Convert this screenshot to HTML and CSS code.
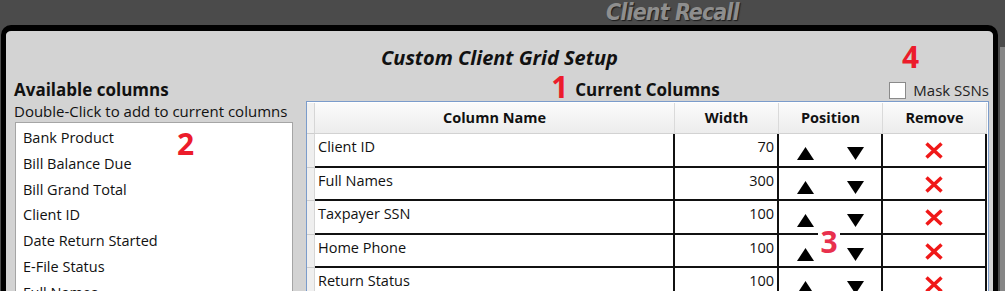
FILE: index.html
```html
<!DOCTYPE html>
<html lang="en">

<head>
    <meta charset="UTF-8">
    <title>Client Recall - Custom Client Grid Setup</title>
    <link rel="stylesheet" href="styles.css">
</head>

<body>
    <div class="topbar">
        <span class="app-title">Client Recall</span>
    </div>

    <div class="dialog">
        <div class="dialog-head">
            <h1 class="dialog-title">Custom Client Grid Setup</h1>
        </div>

        <div class="dialog-body">
            <div class="available">
                <h2 class="section-title">Available columns</h2>
                <p class="hint">Double-Click to add to current columns</p>
                <div class="listbox">
                    <span class="marker marker-2">2</span>
                    <div class="list-item">Bank Product</div>
                    <div class="list-item">Bill Balance Due</div>
                    <div class="list-item">Bill Grand Total</div>
                    <div class="list-item">Client ID</div>
                    <div class="list-item">Date Return Started</div>
                    <div class="list-item">E-File Status</div>
                    <div class="list-item">Full Names</div>
                </div>
            </div>

            <div class="current">
                <div class="current-head">
                    <h2 class="section-title current-title"><span class="marker marker-1">1</span>Current Columns</h2>
                    <label class="mask"><span class="checkbox"></span>Mask SSNs</label>
                    <span class="marker marker-4">4</span>
                </div>

                <div class="grid">
                    <span class="marker marker-3">3</span>
                    <div class="grid-row grid-header">
                        <div class="row-head"></div>
                        <div class="cell col-name">Column Name</div>
                        <div class="cell col-width">Width</div>
                        <div class="cell col-pos">Position</div>
                        <div class="cell col-remove">Remove</div>
                    </div>
                    <div class="grid-row">
                        <div class="row-head"></div>
                        <div class="cell col-name">Client ID</div>
                        <div class="cell col-width">70</div>
                        <div class="cell col-pos">
                            <svg class="arrow" viewBox="0 0 17 13"><polygon points="8.5,0 17,13 0,13" /></svg>
                            <svg class="arrow" viewBox="0 0 17 13"><polygon points="0,0 17,0 8.5,13" /></svg>
                        </div>
                        <div class="cell col-remove">
                            <svg class="remove-x" viewBox="0 0 20 17"><path d="M2.5 1.5 L17.5 15.5 M17.5 1.5 L2.5 15.5" /></svg>
                        </div>
                    </div>
                    <div class="grid-row">
                        <div class="row-head"></div>
                        <div class="cell col-name">Full Names</div>
                        <div class="cell col-width">300</div>
                        <div class="cell col-pos">
                            <svg class="arrow" viewBox="0 0 17 13"><polygon points="8.5,0 17,13 0,13" /></svg>
                            <svg class="arrow" viewBox="0 0 17 13"><polygon points="0,0 17,0 8.5,13" /></svg>
                        </div>
                        <div class="cell col-remove">
                            <svg class="remove-x" viewBox="0 0 20 17"><path d="M2.5 1.5 L17.5 15.5 M17.5 1.5 L2.5 15.5" /></svg>
                        </div>
                    </div>
                    <div class="grid-row">
                        <div class="row-head"></div>
                        <div class="cell col-name">Taxpayer SSN</div>
                        <div class="cell col-width">100</div>
                        <div class="cell col-pos">
                            <svg class="arrow" viewBox="0 0 17 13"><polygon points="8.5,0 17,13 0,13" /></svg>
                            <svg class="arrow" viewBox="0 0 17 13"><polygon points="0,0 17,0 8.5,13" /></svg>
                        </div>
                        <div class="cell col-remove">
                            <svg class="remove-x" viewBox="0 0 20 17"><path d="M2.5 1.5 L17.5 15.5 M17.5 1.5 L2.5 15.5" /></svg>
                        </div>
                    </div>
                    <div class="grid-row">
                        <div class="row-head"></div>
                        <div class="cell col-name">Home Phone</div>
                        <div class="cell col-width">100</div>
                        <div class="cell col-pos">
                            <svg class="arrow" viewBox="0 0 17 13"><polygon points="8.5,0 17,13 0,13" /></svg>
                            <svg class="arrow" viewBox="0 0 17 13"><polygon points="0,0 17,0 8.5,13" /></svg>
                        </div>
                        <div class="cell col-remove">
                            <svg class="remove-x" viewBox="0 0 20 17"><path d="M2.5 1.5 L17.5 15.5 M17.5 1.5 L2.5 15.5" /></svg>
                        </div>
                    </div>
                    <div class="grid-row">
                        <div class="row-head"></div>
                        <div class="cell col-name">Return Status</div>
                        <div class="cell col-width">100</div>
                        <div class="cell col-pos">
                            <svg class="arrow" viewBox="0 0 17 13"><polygon points="8.5,0 17,13 0,13" /></svg>
                            <svg class="arrow" viewBox="0 0 17 13"><polygon points="0,0 17,0 8.5,13" /></svg>
                        </div>
                        <div class="cell col-remove">
                            <svg class="remove-x" viewBox="0 0 20 17"><path d="M2.5 1.5 L17.5 15.5 M17.5 1.5 L2.5 15.5" /></svg>
                        </div>
                    </div>
                </div>
            </div>
        </div>
    </div>
</body>

</html>
```

FILE: styles.css
```css
body {
    margin: 0;
    height: 291px;
    overflow: hidden;
    background: #4b4b4b linear-gradient(90deg, #4b4b4b 1000px, #868686 1000px) 0 47px / 100% 100% no-repeat;
    font-family: "Open Sans", "Noto Sans", sans-serif;
    color: #111;
}

/* Window title strip behind the dialog */
.topbar {
    height: 25px;
    padding-left: 606px;
    box-sizing: border-box;
}

.app-title {
    font-family: "Liberation Sans Narrow", "DejaVu Sans", sans-serif;
    font-stretch: condensed;
    font-style: italic;
    font-weight: bold;
    font-size: 23px;
    line-height: 25px;
    letter-spacing: -0.9px;
    color: #8e8e8e;
    text-shadow: 1px 1px 1px #1c1c1c;
}

/* Dialog */
.dialog {
    margin: 0 7px 0 1px;
    height: 290px;
    border: 5px solid #000;
    border-top-width: 6px;
    border-radius: 10px;
    background: #d3d3d3;
}

.dialog-head {
    height: 48px;
    padding-top: 15px;
    box-sizing: border-box;
    text-align: center;
}

.dialog-title {
    margin: 0;
    font-size: 20px;
    line-height: 24px;
    font-style: italic;
    font-weight: bold;
}

.dialog-body {
    display: flex;
    gap: 13px;
    padding: 0 4px 0 9px;
}

.section-title {
    margin: 0;
    font-size: 17px;
    line-height: 22px;
    font-weight: bold;
}

/* Left side: available columns */
.available {
    width: 278px;
}

.available .section-title {
    margin-left: -1px;
}

.hint {
    margin: 1px 0 0 -1px;
    font-size: 15px;
    line-height: 19px;
    white-space: nowrap;
}

.listbox {
    position: relative;
    margin-top: 1px;
    height: 200px;
    padding-top: 2px;
    background: #fff;
    border: 1px solid #a5a5a5;
}

.list-item {
    height: 25.8px;
    line-height: 25.8px;
    padding-left: 7px;
    font-size: 14.5px;
}

/* Right side: current columns */
.current {
    flex: 1;
}

.current-head {
    position: relative;
    display: grid;
    grid-template-columns: 1fr auto 1fr;
    align-items: center;
    height: 22px;
}

.current-title {
    grid-column: 2;
    position: relative;
}

.mask {
    grid-column: 3;
    justify-self: end;
    display: flex;
    align-items: center;
    gap: 7px;
    font-size: 15px;
    line-height: 19px;
    color: #222;
}

.checkbox {
    width: 17px;
    height: 17px;
    box-sizing: border-box;
    border: 1px solid #8a8a8a;
    background: #fff;
}

.grid {
    position: relative;
    height: 200px;
    background: #fff;
    border: 1px solid #7b9ccb;
}

.grid-row {
    display: flex;
    height: 33.5px;
}

.row-head {
    width: 8px;
    box-sizing: border-box;
    background: #efefef;
    border-right: 1px solid #d6d6d6;
    border-bottom: 1px solid #cdcdcd;
}

.cell {
    box-sizing: border-box;
    width: 104px;
    padding-top: 3px;
    font-size: 14.5px;
    line-height: 19px;
    border-right: 2px solid #111;
    border-bottom: 2px solid #111;
}

.col-name {
    width: 360px;
    padding-left: 3px;
}

.col-width {
    text-align: right;
    padding-right: 3px;
}

.col-pos {
    display: flex;
    justify-content: center;
    gap: 33px;
    padding-top: 13px;
}

.col-remove {
    display: flex;
    justify-content: center;
    padding-top: 8px;
}

.grid-header {
    height: 31px;
    margin-top: 1px;
}

.grid-header .row-head {
    background: #f1f1f1;
}

.grid-header .cell {
    display: block;
    padding: 5px 0 0;
    text-align: center;
    font-size: 14.5px;
    font-weight: bold;
    background: linear-gradient(#fbfbfb, #ececec);
    border-right: 1px solid #dadada;
    border-bottom: 1px solid #d2d2d2;
}

.arrow {
    width: 17px;
    height: 13px;
    fill: #000;
}

.remove-x {
    width: 20px;
    height: 17px;
    fill: none;
    stroke: #f01818;
    stroke-width: 3.5;
}

/* Red callout numbers laid over the screenshot */
.marker {
    position: absolute;
    width: 17px;
    text-align: center;
    font-family: "Open Sans", sans-serif;
    font-size: 30px;
    line-height: 22px;
    font-weight: bold;
    color: #ec1c2b;
}

.marker-1 {
    right: 100%;
    top: -3px;
    margin-right: 7px;
}

.marker-2 {
    left: 161px;
    top: 10px;
}

.marker-3 {
    left: 511px;
    top: 126px;
    width: 22px;
    line-height: 28px;
    background: #fff;
    color: #e8304d;
}

.marker-4 {
    right: 70px;
    top: -33px;
}
```
